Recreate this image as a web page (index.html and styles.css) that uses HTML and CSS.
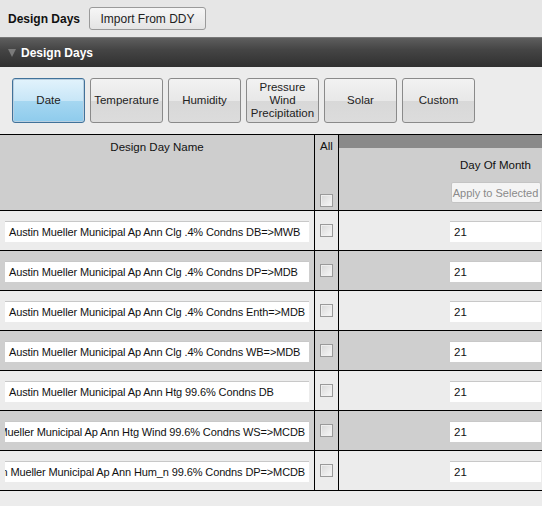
FILE: index.html
```html
<!DOCTYPE html>
<html>
<head>
<meta charset="utf-8">
<link rel="stylesheet" href="styles.css">
</head>
<body>
<div class="topbar">
  <span class="title">Design Days</span>
  <button class="btn import">Import From DDY</button>
</div>
<div class="section">
  <span class="tri"></span>
  <span class="section-title">Design Days</span>
</div>
<div class="tabs">
  <div class="tab active">Date</div>
  <div class="tab">Temperature</div>
  <div class="tab">Humidity</div>
  <div class="tab">Pressure<br>Wind<br>Precipitation</div>
  <div class="tab">Solar</div>
  <div class="tab">Custom</div>
</div>
<div class="table">
  <div class="row head">
    <div class="cell c-name"><span class="hname">Design Day Name</span></div>
    <div class="cell c-all"><span class="hall">All</span><span class="cb"></span></div>
    <div class="cell c-day">
      <div class="strip"></div>
      <div class="dayhead">
        <span class="hday">Day Of Month</span>
        <span class="apply">Apply to Selected</span>
      </div>
    </div>
  </div>
  <div class="row light">
    <div class="cell c-name"><div class="field"><span>Austin Mueller Municipal Ap Ann Clg .4% Condns DB=&gt;MWB</span></div></div>
    <div class="cell c-all"><span class="cb"></span></div>
    <div class="cell c-day"><div class="num">21</div></div>
  </div>
  <div class="row dark">
    <div class="cell c-name"><div class="field"><span>Austin Mueller Municipal Ap Ann Clg .4% Condns DP=&gt;MDB</span></div></div>
    <div class="cell c-all"><span class="cb"></span></div>
    <div class="cell c-day"><div class="num">21</div></div>
  </div>
  <div class="row light">
    <div class="cell c-name"><div class="field"><span>Austin Mueller Municipal Ap Ann Clg .4% Condns Enth=&gt;MDB</span></div></div>
    <div class="cell c-all"><span class="cb"></span></div>
    <div class="cell c-day"><div class="num">21</div></div>
  </div>
  <div class="row dark">
    <div class="cell c-name"><div class="field"><span>Austin Mueller Municipal Ap Ann Clg .4% Condns WB=&gt;MDB</span></div></div>
    <div class="cell c-all"><span class="cb"></span></div>
    <div class="cell c-day"><div class="num">21</div></div>
  </div>
  <div class="row light">
    <div class="cell c-name"><div class="field"><span>Austin Mueller Municipal Ap Ann Htg 99.6% Condns DB</span></div></div>
    <div class="cell c-all"><span class="cb"></span></div>
    <div class="cell c-day"><div class="num">21</div></div>
  </div>
  <div class="row dark">
    <div class="cell c-name"><div class="field scrolled"><span>Austin Mueller Municipal Ap Ann Htg Wind 99.6% Condns WS=&gt;MCDB</span></div></div>
    <div class="cell c-all"><span class="cb"></span></div>
    <div class="cell c-day"><div class="num">21</div></div>
  </div>
  <div class="row light">
    <div class="cell c-name"><div class="field scrolled"><span>Austin Mueller Municipal Ap Ann Hum_n 99.6% Condns DP=&gt;MCDB</span></div></div>
    <div class="cell c-all"><span class="cb"></span></div>
    <div class="cell c-day"><div class="num">21</div></div>
  </div>
</div>
</body>
</html>
```
FILE: styles.css
```css
* { box-sizing: border-box; }
html, body {
  margin: 0;
  padding: 0;
  background: #ececec;
  font-family: "Liberation Sans", Arial, sans-serif;
  font-size: 11px;
  color: #111;
  width: 542px;
  height: 506px;
  overflow: hidden;
}
.topbar {
  height: 37px;
  display: flex;
  align-items: center;
  padding-left: 8px;
  gap: 9px;
  background: #e6e6e6;
}
.title { font-weight: bold; font-size: 12px; }
.btn {
  font-family: inherit;
  font-size: 12px;
  color: #222;
  height: 23px;
  padding: 0 9px;
  border: 1px solid #9a9a9a;
  border-radius: 3px;
  background: linear-gradient(#f6f6f6, #e4e4e4);
}
.import { width: 117px; }
.section {
  height: 30px;
  display: flex;
  align-items: center;
  background: linear-gradient(#5e5e5e, #454545 40%, #303030);
  border-top: 1px solid #777;
}
.tri {
  width: 0; height: 0;
  margin-left: 8px;
  margin-right: 5px;
  border-left: 4px solid transparent;
  border-right: 4px solid transparent;
  border-top: 8px solid #7a7a7a;
}
.section-title { color: #fff; font-weight: bold; font-size: 12px; }
.tabs {
  display: flex;
  gap: 5px;
  padding: 11px 12px 11px 12px;
  height: 67px;
}
.tab {
  width: 73px;
  height: 45px;
  border: 1px solid #8a8a8a;
  border-radius: 3px;
  background: linear-gradient(#f2f2f2, #e8e8e8 50%, #d8d8d8 51%, #dcdcdc);
  display: flex;
  align-items: center;
  justify-content: center;
  text-align: center;
  line-height: 13px;
  font-size: 11.5px;
  color: #222;
}
.tab.active {
  border-color: #41729a;
  background: linear-gradient(#e2f3fc, #c8e6f7 50%, #a6d7f1 51%, #8ecbec);
  box-shadow: 0 0 0 1px #b9cfe0 inset;
}
.table {
  border-top: 1px solid #000;
}
.row {
  display: grid;
  grid-template-columns: 314px 24px 1fr;
  border-bottom: 1px solid #000;
  height: 40px;
}
.row.head { height: 76px; background: #cecece; }
.row.light { background: #ececec; }
.row.dark { background: #cfcfcf; }
.cell { position: relative; }
.c-all { border-left: 1px solid #000; }
.c-day { border-left: 1px solid #000; }
.head .c-name { text-align: center; padding-top: 6px; font-size: 11.5px; }
.head .c-all {
  display: flex;
  flex-direction: column;
  align-items: center;
  justify-content: space-between;
  padding: 5px 0 3px 0;
}
.hall { font-size: 11.5px; }
.strip { height: 13px; background: #8a8a8a; }
.dayhead {
  display: flex;
  flex-direction: column;
  align-items: center;
  padding-left: 111px;
  padding-right: 1px;
}
.hday { margin-top: 11px; font-size: 11.5px; }
.apply {
  margin-top: 11px;
  width: 90px;
  height: 21px;
  border: 1px solid #c4c4c4;
  border-radius: 2px;
  background: #f4f4f4;
  color: #8a8a8a;
  display: flex;
  align-items: center;
  justify-content: center;
  white-space: nowrap;
  font-size: 11px;
}
.cb {
  display: block;
  width: 13px;
  height: 13px;
  border: 1px solid #9a9a9a;
  background: linear-gradient(135deg, #d8d8d8, #f8f8f8);
  box-shadow: 0 0 0 1px #efefef inset;
}
.row:not(.head) .c-all { display: flex; justify-content: center; padding-top: 13px; }
.field {
  margin: 10px 0 0 5px;
  width: 304px;
  height: 21px;
  background: #fff;
  border-top: 1px solid #c8c8c8;
  display: flex;
  align-items: center;
  padding: 0 4px;
  overflow: hidden;
  white-space: nowrap;
  font-size: 11px;
  letter-spacing: -0.12px;
}
.field.scrolled { justify-content: flex-end; }
.field span { flex: none; }
.num {
  margin: 10px 0 0 111px;
  width: 91px;
  height: 21px;
  background: #fff;
  border-top: 1px solid #c8c8c8;
  padding: 0 4px;
  display: flex;
  align-items: center;
  font-size: 11.5px;
}
```
